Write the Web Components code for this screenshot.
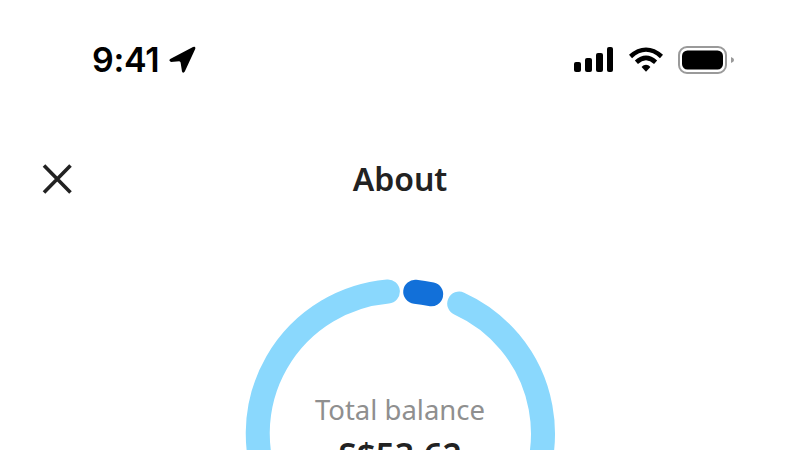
<!DOCTYPE html>
<html lang="en">
<head>
<meta charset="utf-8">
<title>About</title>
<style>
  html, body { margin: 0; height: 450px; overflow: hidden; background: #fff; }
</style>
</head>
<body>
<about-screen>
  <status-bar time="9:41"></status-bar>
  <nav-header title="About"></nav-header>
  <balance-ring label="Total balance" amount="S$53.62"></balance-ring>
</about-screen>

<script>
class AboutScreen extends HTMLElement {
    constructor() {
        super();
        this.shadowDOM = this.attachShadow({mode: "open"});
    }
    connectedCallback() {
        this.shadowDOM.innerHTML = `
        <style>
        :host {
            display: flex;
            flex-direction: column;
            width: 800px;
            height: 450px;
            overflow: hidden;
            background: #fff;
        }
        </style>
        <slot></slot>`;
    }
}

class StatusBar extends HTMLElement {
    constructor() {
        super();
        this.shadowDOM = this.attachShadow({mode: "open"});
    }
    connectedCallback() {
        this.shadowDOM.innerHTML = `
        <style>
        :host {
            display: flex;
            justify-content: space-between;
            align-items: center;
            height: 27px;
            padding: 46px 65px 0 92px;
            color: #000;
        }
        .left, .right { display: flex; align-items: center; }
        .left { gap: 10px; }
        .right { gap: 15px; }
        .signal { margin-right: 1px; }
        .time {
            font: 600 34px/27px Inter, "Liberation Sans", sans-serif;
            letter-spacing: -.3px;
        }
        svg { display: block; }
        </style>
        <div class="left">
            <span class="time">${this.getAttribute("time")}</span>
            <svg width="27" height="27" viewBox="0 0 27 27">
                <path d="M1.2 13 L24 1 Q26.9 0 26.2 3 L15.8 25.6 Q14.2 27.8 13 25.4 L11.6 16.6 Q11.3 15.3 10.2 15.2 L2 15.9 Q-.8 14.6 1.2 13Z"/>
            </svg>
        </div>
        <div class="right">
            <svg class="signal" width="39" height="26" viewBox="0 0 39 26">
                <rect x="0" y="15" width="7" height="10" rx="2"/>
                <rect x="11" y="11" width="7" height="14" rx="2"/>
                <rect x="22" y="6" width="7" height="19" rx="2"/>
                <rect x="33" y="0" width="6" height="25" rx="2"/>
            </svg>
            <svg width="34" height="26" viewBox="0 0 34 26" fill="none" stroke="#000" stroke-width="4.6">
                <path d="M1.5 9.5 C11.5 .4 22.5 .4 32.5 9.5"/>
                <path d="M7.4 15.2 C13.6 9.6 20.4 9.6 26.6 15.2"/>
                <path d="M12.6 20 L17 24.8 L21.4 20 C18.6 17 15.4 17 12.6 20Z" fill="#000" stroke="none"/>
            </svg>
            <svg width="57" height="28" viewBox="0 0 57 28">
                <rect x="1" y="1" width="47" height="26" rx="8" fill="none" stroke="#9a9a9a" stroke-width="2"/>
                <rect x="4" y="4.5" width="41" height="19" rx="5.5"/>
                <path d="M53 11 C55 11.8 56 12.8 56 14 C56 15.2 55 16.2 53 17Z" fill="#9a9a9a"/>
            </svg>
        </div>`;
    }
}

class NavHeader extends HTMLElement {
    constructor() {
        super();
        this.shadowDOM = this.attachShadow({mode: "open"});
    }
    connectedCallback() {
        this.shadowDOM.innerHTML = `
        <style>
        :host {
            display: grid;
            grid-template-columns: 1fr auto 1fr;
            align-items: center;
            height: 42px;
            margin-top: 85px;
            padding: 0 42px;
        }
        svg { display: block; }
        h1 {
            margin: 0;
            font: 600 32px/42px "Noto Sans", "Open Sans", sans-serif;
            color: #222;
        }
        </style>
        <svg width="30" height="30" viewBox="0 0 30 30" fill="none" stroke="#222" stroke-width="3.6">
            <path d="M2 1.5 L28.5 28.5 M28.5 1.5 L2 28.5"/>
        </svg>
        <h1>${this.getAttribute("title")}</h1>
        <span></span>`;
    }
}

class BalanceRing extends HTMLElement {
    constructor() {
        super();
        this.shadowDOM = this.attachShadow({mode: "open"});
    }
    connectedCallback() {
        this.shadowDOM.innerHTML = `
        <style>
        :host {
            display: block;
            position: relative;
            width: 310px;
            height: 310px;
            margin: 79px auto 0;
            flex: none;
        }
        svg { display: block; overflow: visible; }
        .center {
            position: absolute;
            inset: 0;
            display: flex;
            flex-direction: column;
            align-items: center;
            justify-content: center;
            text-align: center;
        }
        .label {
            font: 400 27.5px/42px "Noto Sans", "Open Sans", sans-serif;
            color: #8f8f8f;
        }
        .amount {
            font: 600 33.5px/48px "Noto Sans", "Open Sans", sans-serif;
            color: #222;
        }
        </style>
        <svg width="310" height="310" viewBox="0 0 310 310" fill="none" stroke-width="24" stroke-linecap="round">
            <path d="M214.2 24.6 A142.6 142.6 0 1 1 142.87 12.44" stroke="#8ad8fd"/>
            <path d="M170.2 12.7 A142.6 142.6 0 0 1 186.2 15.3" stroke="#1270d9"/>
        </svg>
        <div class="center">
            <div class="label">${this.getAttribute("label")}</div>
            <div class="amount">${this.getAttribute("amount")}</div>
        </div>`;
    }
}

customElements.define("about-screen", AboutScreen);
customElements.define("status-bar", StatusBar);
customElements.define("nav-header", NavHeader);
customElements.define("balance-ring", BalanceRing);
</script>
</body>
</html>
